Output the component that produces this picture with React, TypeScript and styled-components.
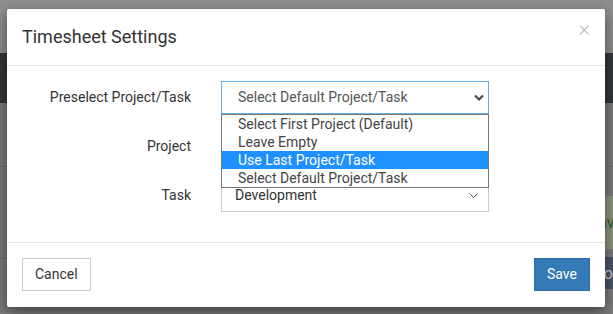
import React from "react";
import styled, { createGlobalStyle } from "styled-components";

const GlobalStyle = createGlobalStyle`
  html, body {
    margin: 0;
    padding: 0;
    width: 613px;
    height: 314px;
    overflow: hidden;
    font-family: Roboto, "Liberation Sans", Arial, sans-serif;
  }
`;

// page under the backdrop (already darkened)
const Page = styled.div`
  position: relative;
  width: 613px;
  height: 314px;
  overflow: hidden;
  display: flex;
  flex-direction: column;
  background: #7c7c7c;
`;

const TopArea = styled.div`
  height: 53px;
  background: #8f8f8f;
`;

const NavBand = styled.div`
  height: 50px;
  background: #33383c;
`;

const Band = styled.div<{ $h: number }>`
  height: ${(p) => p.$h}px;
  border-bottom: 1px solid #6f6f6f;
  display: flex;
  flex-direction: column;
  align-items: flex-end;
`;

const Card = styled.div<{ $bg: string; $color: string; $h: number; $top: number }>`
  align-self: flex-end;
  margin-top: ${(p) => p.$top}px;
  width: 200px;
  height: ${(p) => p.$h}px;
  background: ${(p) => p.$bg};
  color: ${(p) => p.$color};
  font-size: 16px;
  display: flex;
  align-items: center;
  justify-content: flex-end;
  margin-right: -6px;
`;

// modal
const Modal = styled.div`
  position: absolute;
  left: 7px;
  top: 9px;
  width: 598px;
  height: 298px;
  background: #fff;
  border-radius: 2px;
  box-shadow: 0 5px 15px rgba(0, 0, 0, 0.5);
  display: flex;
  flex-direction: column;
`;

const Header = styled.div`
  padding: 15px;
  border-bottom: 1px solid #e5e5e5;
  display: flex;
  justify-content: space-between;
  align-items: flex-start;
`;

const Title = styled.h4`
  margin: 0;
  font-size: 18px;
  font-weight: 400;
  line-height: 25.7px;
  color: #333;
`;

const Close = styled.span`
  font-size: 22px;
  font-weight: 300;
  line-height: 1;
  color: #c4c4c4;
  margin-top: -6px;
  margin-right: 0;
`;

const Body = styled.div`
  padding: 15px 15px 30px;
  border-bottom: 1px solid #e5e5e5;
`;

const Form = styled.div`
  display: grid;
  grid-template-columns: 169px 268px;
  column-gap: 30px;
  row-gap: 16px;
  align-items: center;
`;

const Label = styled.label`
  text-align: right;
  font-size: 14px;
  color: #333;
`;

const Field = styled.div`
  position: relative;
`;

const Select = styled.div<{ $focus?: boolean; $pad: number; $padRight: number }>`
  height: 33px;
  box-sizing: border-box;
  border: 1px solid ${(p) => (p.$focus ? "#66afe9" : "#ccc")};
  padding-left: ${(p) => p.$pad}px;
  padding-right: ${(p) => p.$padRight}px;
  display: flex;
  align-items: center;
  justify-content: space-between;
  font-size: 14px;
  color: ${(p) => (p.$focus ? "#555" : "#333")};
  background: #fff;
`;

const Options = styled.ul`
  position: absolute;
  left: 0;
  top: 33px;
  width: 268px;
  box-sizing: border-box;
  margin: 0;
  padding: 0;
  list-style: none;
  border: 1px solid #767676;
  background: #fff;
  z-index: 2;
`;

const Option = styled.li<{ $active?: boolean }>`
  height: 18px;
  line-height: 18px;
  padding-left: 16px;
  font-size: 14px;
  color: ${(p) => (p.$active ? "#fff" : "#444")};
  background: ${(p) => (p.$active ? "#1e90ff" : "transparent")};
  white-space: nowrap;
`;

const Footer = styled.div`
  padding: 15px;
  display: flex;
  justify-content: space-between;
`;

const Button = styled.button<{ $primary?: boolean }>`
  height: 33px;
  padding: 0 12px;
  font-family: inherit;
  font-size: 14px;
  border: 1px solid ${(p) => (p.$primary ? "#2e6da4" : "#ccc")};
  background: ${(p) => (p.$primary ? "#337ab7" : "#fff")};
  color: ${(p) => (p.$primary ? "#fff" : "#333")};
  border-radius: 0;
`;

const Chevron = ({ bold }: { bold?: boolean }) =>
  bold ? (
    <svg width="10" height="7" viewBox="0 0 10 7">
      <polyline points="1,1.5 5,5.5 9,1.5" fill="none" stroke="#444" strokeWidth="2" />
    </svg>
  ) : (
    <svg width="9" height="5" viewBox="0 0 9 5">
      <polyline points="0.5,0.5 4.5,4.5 8.5,0.5" fill="none" stroke="#555" strokeWidth="1" />
    </svg>
  );

const options = [
  "Select First Project (Default)",
  "Leave Empty",
  "Use Last Project/Task",
  "Select Default Project/Task",
];

export default function App() {
  return (
    <>
      <GlobalStyle />
      <Page>
        <TopArea />
        <NavBand />
        <Band $h={63} />
        <Band $h={91}>
          <Card $bg="#8a957f" $color="#3e5a33" $h={53} $top={29}>
            <span style={{ marginRight: -4 }}>Save</span>
          </Card>
        </Band>
        <Card $bg="#4b5667" $color="#c8ccd4" $h={32} $top={-2}>
          <span style={{ marginRight: -8 }}>Tour</span>
        </Card>
        <Modal>
          <Header>
            <Title>Timesheet Settings</Title>
            <Close>×</Close>
          </Header>
          <Body>
            <Form>
              <Label>Preselect Project/Task</Label>
              <Field>
                <Select $focus $pad={16} $padRight={4}>
                  <span>Select Default Project/Task</span>
                  <Chevron bold />
                </Select>
                <Options>
                  {options.map((o, i) => (
                    <Option key={o} $active={i === 2}>
                      {o}
                    </Option>
                  ))}
                </Options>
              </Field>
              <Label>Project</Label>
              <Field>
                <Select $pad={13} $padRight={10}>
                  <span />
                  <Chevron />
                </Select>
              </Field>
              <Label>Task</Label>
              <Field>
                <Select $pad={13} $padRight={10}>
                  <span>Development</span>
                  <Chevron />
                </Select>
              </Field>
            </Form>
          </Body>
          <Footer>
            <Button>Cancel</Button>
            <Button $primary>Save</Button>
          </Footer>
        </Modal>
      </Page>
    </>
  );
}
